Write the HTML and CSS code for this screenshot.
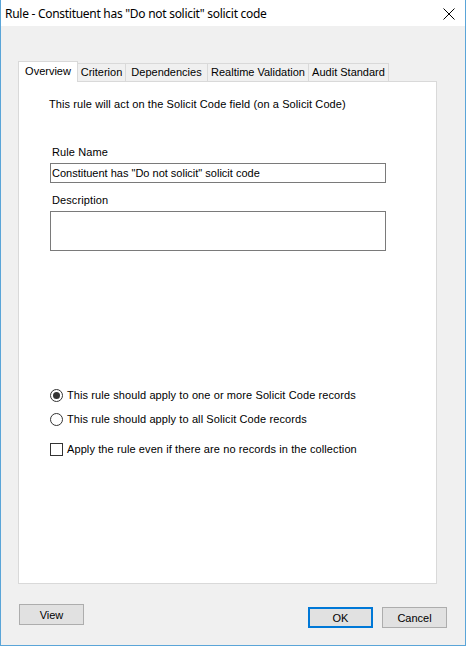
FILE: index.html
```html
<!DOCTYPE html>
<html lang="en">
<head>
  <meta charset="UTF-8" />
  <title>Rule - Constituent has "Do not solicit" solicit code</title>
  <link rel="stylesheet" href="styles.css">
</head>
<body>
  <div class="window">
    <!-- Title bar -->
    <div class="titlebar">
      <span class="title">Rule - Constituent has "Do not solicit" solicit code</span>
      <svg class="close" width="12" height="12" viewBox="0 0 12 12">
        <path d="M0.5 0.5 L11.5 11.5 M11.5 0.5 L0.5 11.5" stroke="#000" stroke-width="1" fill="none"/>
      </svg>
    </div>

    <div class="client">
      <!-- Tabs -->
      <div class="tabs">
        <div class="tab active tab-overview">Overview</div>
        <div class="tab tab-criterion">Criterion</div>
        <div class="tab tab-deps">Dependencies</div>
        <div class="tab tab-realtime">Realtime Validation</div>
        <div class="tab tab-audit">Audit Standard</div>
      </div>

      <div class="panel">
        <div class="intro">This rule will act on the Solicit Code field (on a Solicit Code)</div>

        <div class="form">
          <div class="label">Rule Name</div>
          <div class="field">Constituent has "Do not solicit" solicit code</div>
          <div class="label">Description</div>
          <div class="field memo"></div>
        </div>

        <div class="options">
          <div class="option"><span class="radio checked"></span>This rule should apply to one or more Solicit Code records</div>
          <div class="option"><span class="radio"></span>This rule should apply to all Solicit Code records</div>
          <div class="option check-row"><span class="check"></span>Apply the rule even if there are no records in the collection</div>
        </div>
      </div>

      <!-- Bottom buttons -->
      <div class="buttons">
        <button class="btn view">View</button>
        <div class="right">
          <button class="btn default">OK</button>
          <button class="btn">Cancel</button>
        </div>
      </div>
    </div>
  </div>
</body>
</html>
```
FILE: styles.css
```css
body {
  margin: 0;
  background: #fff;
  font-family: 'Liberation Sans', Arial, sans-serif;
  font-size: 11px;
  letter-spacing: 0.1px;
  color: #000;
}
.window {
  width: 466px;
  height: 646px;
  box-sizing: border-box;
  border: 1px solid #5aa5d8;
  border-top: none;
  display: flex;
  flex-direction: column;
  background: #f0f0f0;
}

/* --- Title bar --- */
.titlebar {
  height: 26px;
  background: #fff;
  display: flex;
  align-items: center;
  justify-content: space-between;
  padding: 0 10px 0 4px;
}
.title {
  font-family: 'Noto Sans', sans-serif;
  font-size: 12px;
  letter-spacing: -0.28px;
}
.close { margin-top: 1px; }

/* --- Tabs --- */
.client {
  flex: 1;
  display: flex;
  flex-direction: column;
  padding: 35px 28px 0 17px;
}
.tabs {
  display: flex;
  align-items: flex-end;
  height: 20px;
  letter-spacing: 0;
}
.tab {
  box-sizing: border-box;
  height: 18px;
  line-height: 17px;
  text-align: center;
  border: 1px solid #d9d9d9;
  border-bottom: none;
  border-left: none;
  background: #f0f0f0;
}
.tab.active {
  height: 21px;
  line-height: 19px;
  border-left: 1px solid #d9d9d9;
  background: #fff;
  position: relative;
  z-index: 1;
  margin-bottom: -1px;
}
.tab-overview { width: 60px; }
.tab-criterion { width: 48px; }
.tab-deps { width: 82px; }
.tab-realtime { width: 101px; }
.tab-audit { width: 80px; }

.panel {
  height: 503px;
  box-sizing: border-box;
  background: #fff;
  border: 1px solid #d9d9d9;
  padding: 16px 0 0 30px;
}
.intro { line-height: 13px; }

.form {
  margin: 35px 0 0 1px;
  width: 336px;
}
.label {
  padding-left: 2px;
  line-height: 13px;
  margin-bottom: 4px;
}
.field {
  box-sizing: border-box;
  height: 20px;
  border: 1px solid #7a7a7a;
  background: #fff;
  padding: 2px 0 0 1px;
  line-height: 14px;
  margin-bottom: 11px;
  letter-spacing: 0;
}
.field.memo { height: 40px; }

.options { margin-top: 136px; }
.option {
  display: flex;
  align-items: center;
  height: 16px;
  margin-bottom: 8px;
}
.check-row { margin-top: 14px; }
.radio {
  width: 11px; height: 11px;
  border: 1px solid #333;
  border-radius: 50%;
  margin: 0 4px 0 1px;
  display: flex;
  align-items: center;
  justify-content: center;
}
.radio.checked::after {
  content: '';
  width: 7px; height: 7px;
  border-radius: 50%;
  background: #333;
}
.check {
  width: 11px; height: 11px;
  border: 1px solid #333;
  background: #fff;
  margin: 0 4px 0 1px;
}

/* --- Buttons --- */
.buttons {
  display: flex;
  justify-content: space-between;
  padding: 20px 0 0 1px;
  margin-right: -10px;
}
.right { display: flex; gap: 9px; margin-top: 3px; }
.btn {
  width: 65px;
  height: 21px;
  box-sizing: border-box;
  background: #e1e1e1;
  border: 1px solid #adadad;
  font-family: 'Liberation Sans', Arial, sans-serif;
  font-size: 11px;
  color: #000;
  padding: 0;
}
.btn.default {
  border: 2px solid #0078d7;
}
```
